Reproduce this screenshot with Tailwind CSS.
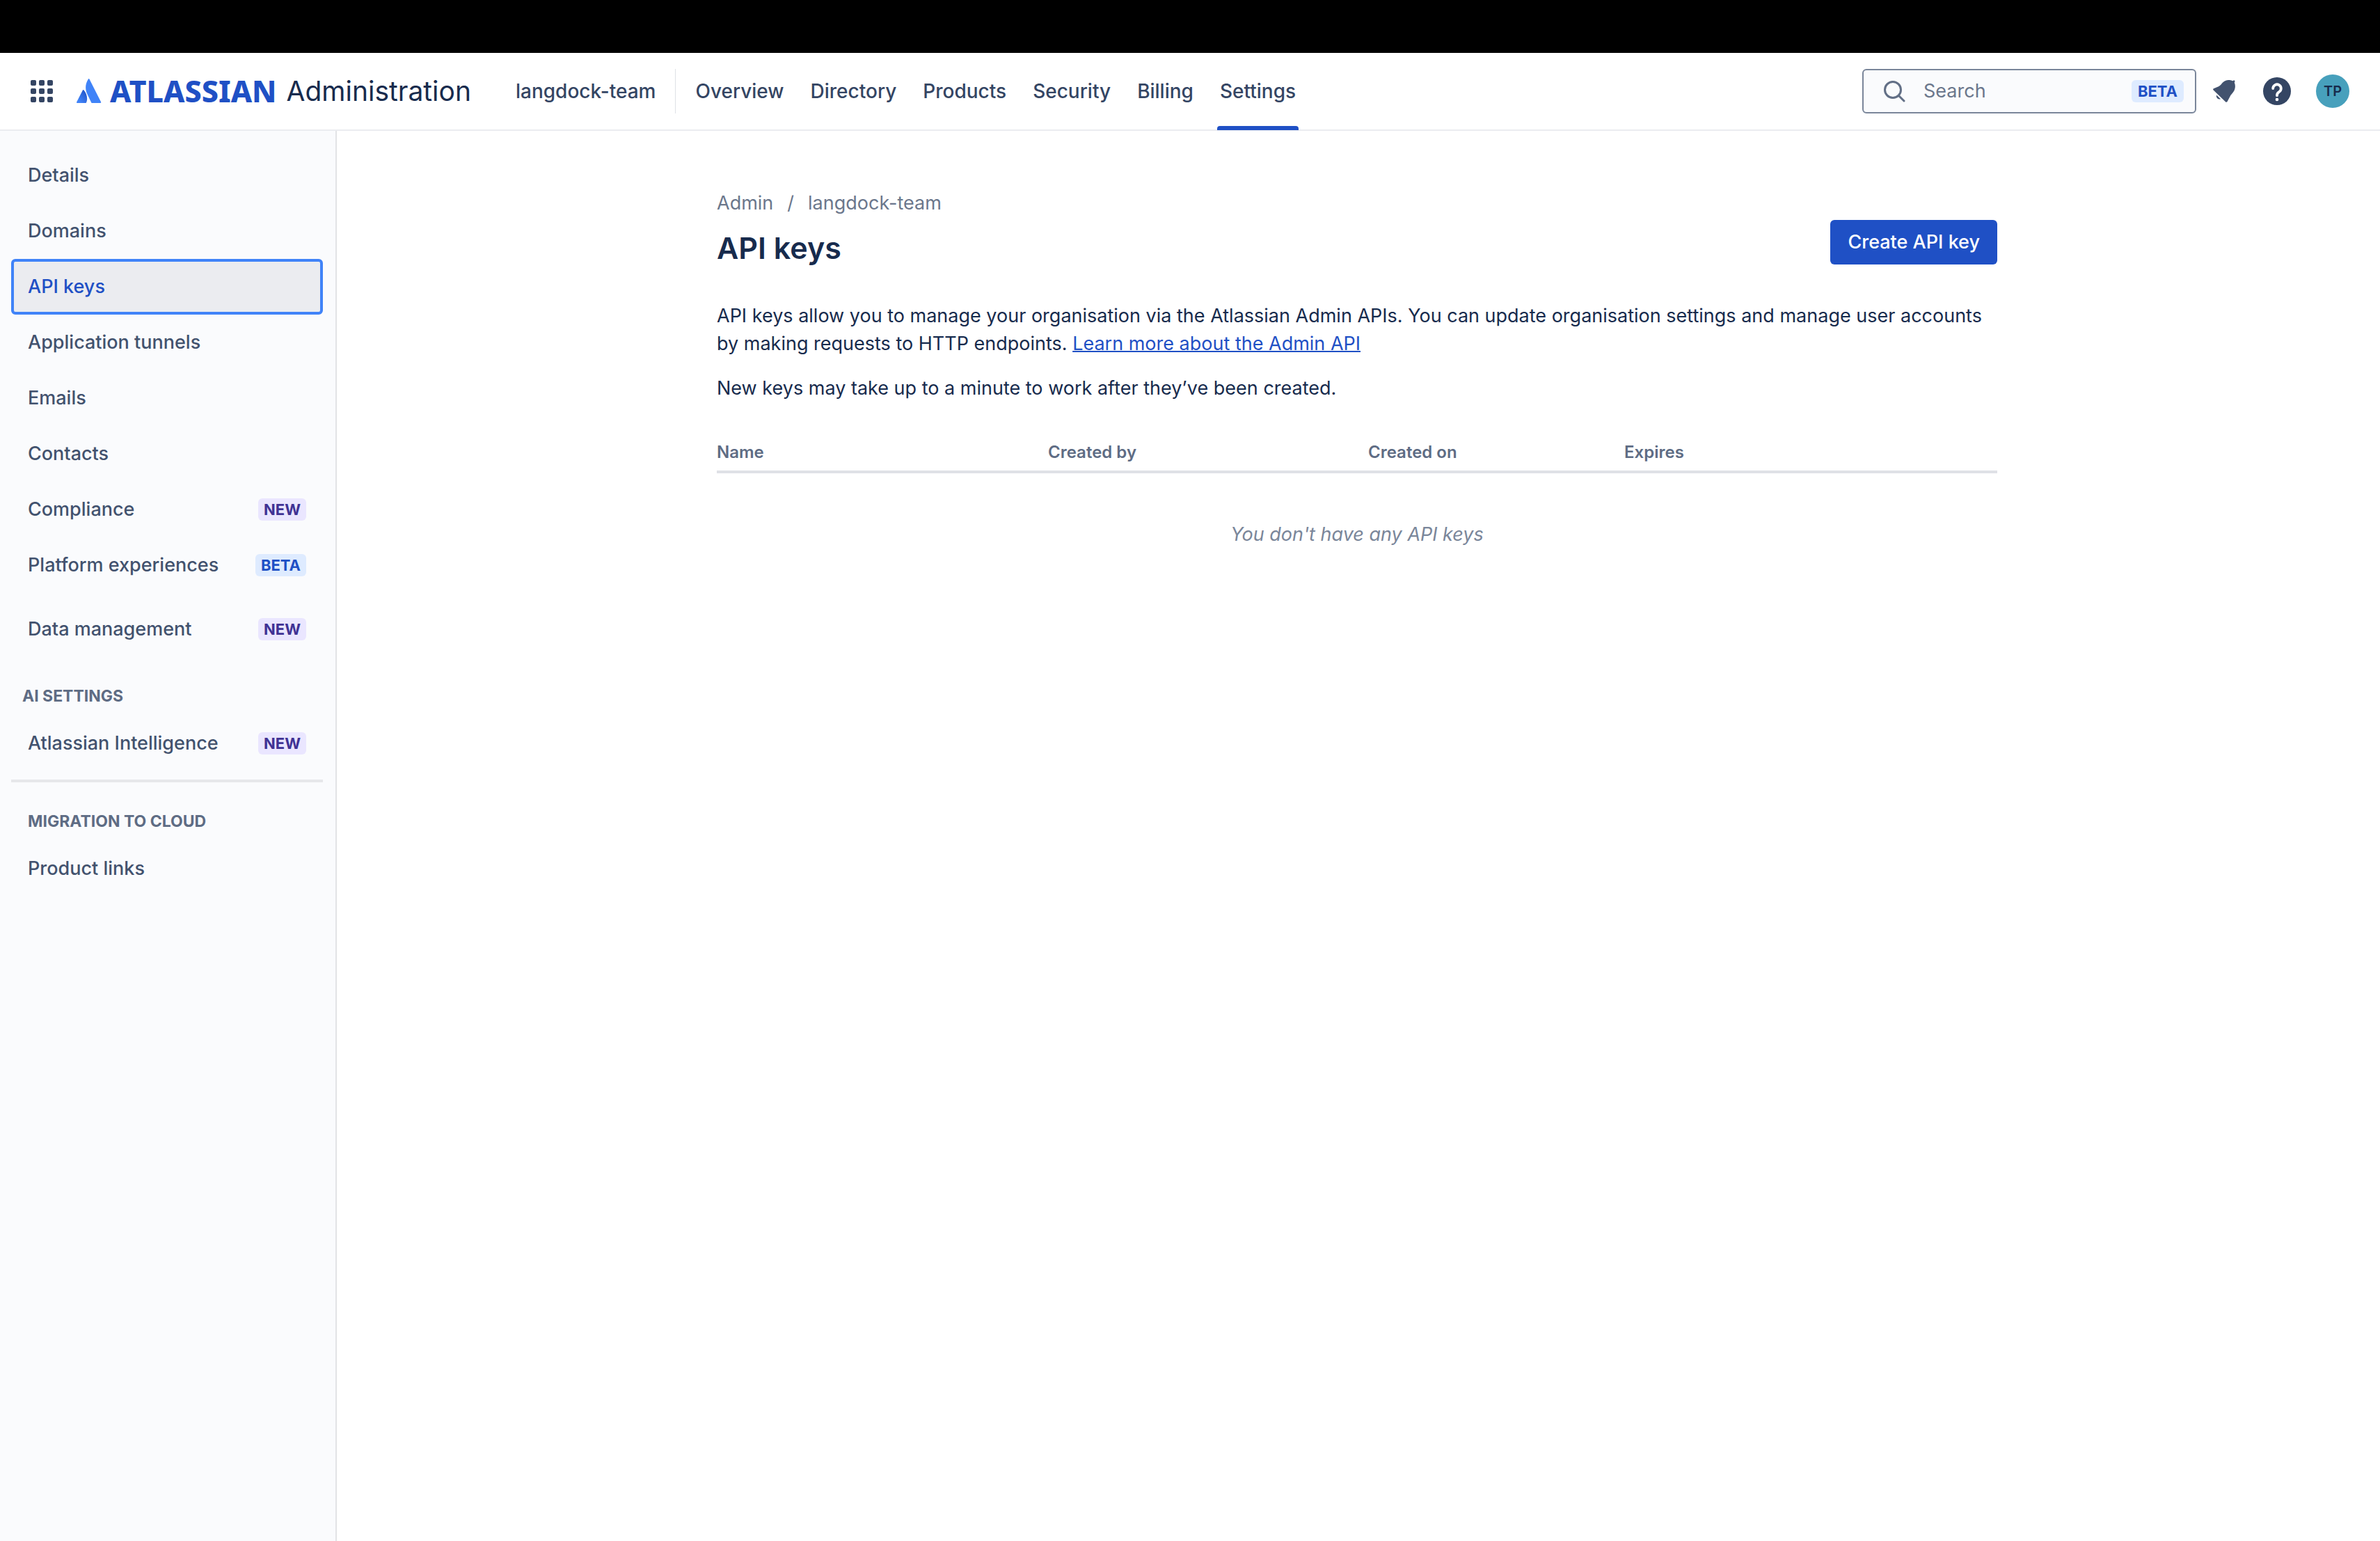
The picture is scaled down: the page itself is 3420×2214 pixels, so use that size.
<!DOCTYPE html>
<html lang="en">
<head>
<meta charset="utf-8">
<title>API keys - Atlassian Administration</title>
<script src="https://cdn.jsdelivr.net/npm/@tailwindcss/browser@4"></script>
</head>
<body class="flex min-h-screen flex-col bg-white font-['Inter',sans-serif] text-[27px] leading-10 text-[#172b4d]">
<div class="h-19 bg-black"></div>
<header class="flex h-28 items-center border-b-2 border-[#ebecf0] pr-11 pl-11">
  <button type="button" aria-label="Switch to" class="flex size-8 items-center justify-center">
    <svg class="size-8" viewBox="0 0 32 32" fill="#344563"><rect x="0" y="0" width="8" height="8" rx="2"/><rect x="12" y="0" width="8" height="8" rx="2"/><rect x="24" y="0" width="8" height="8" rx="2"/><rect x="0" y="12" width="8" height="8" rx="2"/><rect x="12" y="12" width="8" height="8" rx="2"/><rect x="24" y="12" width="8" height="8" rx="2"/><rect x="0" y="24" width="8" height="8" rx="2"/><rect x="12" y="24" width="8" height="8" rx="2"/><rect x="24" y="24" width="8" height="8" rx="2"/></svg>
  </button>
  <a href="#" class="ml-8 flex items-center whitespace-nowrap">
    <svg class="ml-0.5 size-9" viewBox="0 0 36 36"><defs><linearGradient id="g" x1="1" y1="0.1" x2="0.3" y2="0.9"><stop offset="0" stop-color="#1f50c5"/><stop offset="1" stop-color="#4083f8"/></linearGradient></defs><path d="M10.500 16.500a1 1 0 0 0-1.700.2L.2 33.500A1 1 0 0 0 1 35h12a1 1 0 0 0 .9-.6c2.600-5.300 1-12.900-3.400-17.900z" fill="url(#g)"/><path d="M16.800.7c-4.800 7.600-4.500 15.500-1.300 21.900l5.800 11.800a1 1 0 0 0 .9.600h12a1 1 0 0 0 .9-1.500L18.500.7a1 1 0 0 0-1.700 0z" fill="#4083f8"/></svg>
    <span class="ml-3 font-['Noto_Sans',sans-serif] text-[43px] font-extrabold text-[#1f50c5]">ATLASSIAN</span>
    <span class="ml-3.5 text-[39px]">Administration</span>
  </a>
  <nav class="ml-16 flex items-center self-stretch text-[28px] font-medium whitespace-nowrap text-[#344563]">
    <a href="#">langdock-team</a>
    <span class="mx-7 h-16 w-px bg-[#dfe1e6]"></span>
    <div class="flex gap-[38px] self-stretch">
      <a href="#" class="flex items-center">Overview</a>
      <a href="#" class="flex items-center">Directory</a>
      <a href="#" class="flex items-center">Products</a>
      <a href="#" class="flex items-center">Security</a>
      <a href="#" class="flex items-center">Billing</a>
      <a href="#" class="relative flex items-center">Settings<span class="absolute -inset-x-1 -bottom-px h-1.5 rounded-t-sm bg-[#1f50c5]"></span></a>
    </div>
  </nav>
  <div class="ml-auto flex h-16 w-120 items-center rounded-md border-2 border-[#7a869a] bg-[#fafbfd] pr-4 pl-7">
    <svg class="size-8 shrink-0" viewBox="0 0 32 32" fill="none" stroke="#626f86" stroke-width="3" stroke-linecap="round"><circle cx="14" cy="14" r="11.500"/><path d="M22.500 22.500L30 30"/></svg>
    <input type="search" aria-label="Search" placeholder="Search" class="ml-[26px] w-0 flex-1 outline-none placeholder:text-[#6b778c]">
    <span class="rounded-md bg-[#deebff] px-[9px] text-[22px] leading-8 font-bold text-[#1f50c5]">BETA</span>
  </div>
  <button type="button" aria-label="Notifications" class="ml-6"><svg class="size-8" viewBox="0 0 32 32" fill="#42526e"><path d="M.4 14.200Q-.3 13 .9 12.200L8 9.300Q10 8.300 11.500 6.500C16 0 23-1.500 28.500 1.300L30 .2Q31.600.2 31.500 2L30.800 3.500C33 9 32 15 27 20Q25.300 21.600 24.300 24L20.500 31Q19.500 32.500 18 31.200z"/><path d="M5 21.500L11 27.200A4.600 4.600 0 0 1 5 21.500z"/></svg></button>
  <button type="button" aria-label="Help" class="ml-10"><svg class="size-10" viewBox="0 0 40 40"><circle cx="20" cy="20" r="20" fill="#344563"/><path d="M14.200 16a5.800 5.800 0 1 1 8.600 5.200c-2 1-2.800 2-2.800 5" fill="none" stroke="#fff" stroke-width="3.800" stroke-linecap="round"/><circle cx="20" cy="32" r="2.300" fill="#fff"/></svg></button>
  <button type="button" class="ml-9 flex size-12 items-center justify-center rounded-full bg-[#47a0bc] text-xl font-semibold">TP</button>
</header>
<div class="flex grow">
  <aside class="w-[484px] shrink-0 border-r-2 border-[#e2e3e6] bg-[#fafbfd] pt-6 pr-[18px] pl-4 font-medium text-[#42526e]">
    <ul>
      <li><a href="#" class="flex h-20 items-center justify-between px-6">Details</a></li>
      <li><a href="#" class="flex h-20 items-center justify-between px-6">Domains</a></li>
      <li><a href="#" aria-current="page" class="flex h-20 items-center justify-between rounded-md border-4 border-[#4083f8] bg-[#ebecf0] px-5 text-[#1f50c5]">API keys</a></li>
      <li><a href="#" class="flex h-20 items-center justify-between px-6">Application tunnels</a></li>
      <li><a href="#" class="flex h-20 items-center justify-between px-6">Emails</a></li>
      <li><a href="#" class="flex h-20 items-center justify-between px-6">Contacts</a></li>
      <li><a href="#" class="flex h-20 items-center justify-between px-6">Compliance <span class="rounded-md bg-[#eae6ff] px-2 text-[22px] leading-8 font-bold text-[#403294]">NEW</span></a></li>
      <li><a href="#" class="flex h-20 items-center justify-between px-6">Platform experiences <span class="rounded-md bg-[#deebff] px-2 text-[22px] leading-8 font-bold text-[#1f50c5]">BETA</span></a></li>
      <li><a href="#" class="mt-3 flex h-20 items-center justify-between px-6">Data management <span class="rounded-md bg-[#eae6ff] px-2 text-[22px] leading-8 font-bold text-[#403294]">NEW</span></a></li>
    </ul>
    <h2 class="mt-9 px-4 text-[23px] font-bold text-[#5e6c84]">AI SETTINGS</h2>
    <a href="#" class="mt-2 flex h-20 items-center justify-between px-6">Atlassian Intelligence <span class="rounded-md bg-[#eae6ff] px-2 text-[22px] leading-8 font-bold text-[#403294]">NEW</span></a>
    <hr class="mt-3 border-t-4 border-[#e6e7ea]">
    <h2 class="mt-9 px-6 text-[23px] font-bold text-[#5e6c84]">MIGRATION TO CLOUD</h2>
    <a href="#" class="mt-2 flex h-20 items-center px-6">Product links</a>
  </aside>
  <main class="grow pr-8 pl-7">
    <div class="mx-auto max-w-[1840px] pt-21">
      <nav class="flex gap-5 text-[#6b778c]"><a href="#">Admin</a><span>/</span><a href="#">langdock-team</a></nav>
      <div class="flex items-start justify-between">
        <h1 class="mt-4 text-[43px] leading-14 font-semibold">API keys</h1>
        <button type="button" class="mt-1 h-16 rounded-md bg-[#1f50c5] px-[25px] font-medium whitespace-nowrap text-white">Create API key</button>
      </div>
      <p class="mt-[50px]">API keys allow you to manage your organisation via the Atlassian Admin APIs. You can update organisation settings and manage user accounts by making requests to HTTP endpoints. <a href="#" class="text-[#1f50c5] underline decoration-2">Learn more about the Admin API</a></p>
      <p class="mt-6">New keys may take up to a minute to work after they’ve been created.</p>
      <table class="mt-14 w-full table-fixed text-left">
        <thead class="border-b-4 border-[#dfe1e6] text-2xl text-[#5e6c84]">
          <tr class="h-11 align-top"><th class="w-[476px] font-semibold">Name</th><th class="w-[460px] font-semibold">Created by</th><th class="w-[368px] font-semibold">Created on</th><th class="font-semibold">Expires</th></tr>
        </thead>
        <tbody><tr><td colspan="4" class="pt-17 text-center text-[#7a869a] italic">You don't have any API keys</td></tr></tbody>
      </table>
    </div>
  </main>
</div>
</body>
</html>
